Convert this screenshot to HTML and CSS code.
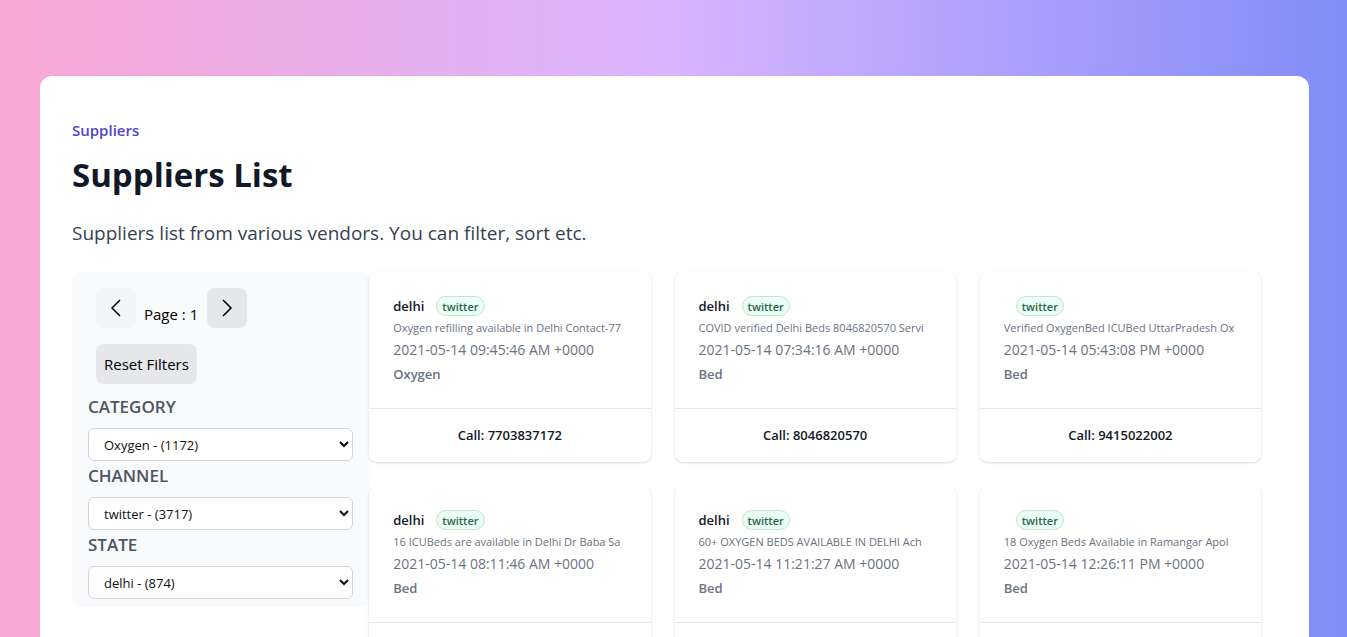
FILE: index.html
```html
<!DOCTYPE html>
<html lang="en">
<head>
<meta charset="utf-8">
<meta name="viewport" content="width=device-width, initial-scale=1">
<title>Suppliers List</title>
<link rel="stylesheet" href="styles.css">
</head>
<body>
<main class="page">
  <section class="panel">
    <header class="intro">
      <p class="eyebrow">Suppliers</p>
      <h1 class="title">Suppliers List</h1>
      <p class="lead">Suppliers list from various vendors. You can filter, sort etc.</p>
    </header>
    <div class="content">
      <aside class="filters">
        <div class="pager">
          <button class="btn btn-icon btn-muted" type="button" aria-label="Previous page">
            <svg viewBox="0 0 24 24" width="24" height="24"><path d="M16 4 8 12l8 8"/></svg>
          </button>
          <span class="page-label">Page : 1</span>
          <button class="btn btn-icon" type="button" aria-label="Next page">
            <svg viewBox="0 0 24 24" width="24" height="24"><path d="m8 4 8 8-8 8"/></svg>
          </button>
        </div>
        <button class="btn btn-reset" type="button">Reset Filters</button>
        <div class="field">
          <label for="category">CATEGORY</label>
          <select id="category"><option>Oxygen - (1172)</option></select>
        </div>
        <div class="field">
          <label for="channel">CHANNEL</label>
          <select id="channel"><option>twitter - (3717)</option></select>
        </div>
        <div class="field">
          <label for="state">STATE</label>
          <select id="state"><option>delhi - (874)</option></select>
        </div>
      </aside>
      <div class="cards">
        <article class="card">
          <div class="card-body">
            <div class="card-head"><h2 class="place">delhi</h2><span class="badge">twitter</span></div>
            <p class="desc">Oxygen refilling available in Delhi Contact-77</p>
            <p class="time">2021-05-14 09:45:46 AM +0000</p>
            <p class="kind">Oxygen</p>
          </div>
          <div class="card-foot"><a href="tel:7703837172">Call: 7703837172</a></div>
        </article>
        <article class="card">
          <div class="card-body">
            <div class="card-head"><h2 class="place">delhi</h2><span class="badge">twitter</span></div>
            <p class="desc">COVID verified Delhi Beds 8046820570 Servi</p>
            <p class="time">2021-05-14 07:34:16 AM +0000</p>
            <p class="kind">Bed</p>
          </div>
          <div class="card-foot"><a href="tel:8046820570">Call: 8046820570</a></div>
        </article>
        <article class="card">
          <div class="card-body">
            <div class="card-head"><h2 class="place"></h2><span class="badge">twitter</span></div>
            <p class="desc">Verified OxygenBed ICUBed UttarPradesh Ox</p>
            <p class="time">2021-05-14 05:43:08 PM +0000</p>
            <p class="kind">Bed</p>
          </div>
          <div class="card-foot"><a href="tel:9415022002">Call: 9415022002</a></div>
        </article>
        <article class="card">
          <div class="card-body">
            <div class="card-head"><h2 class="place">delhi</h2><span class="badge">twitter</span></div>
            <p class="desc">16 ICUBeds are available in Delhi Dr Baba Sa</p>
            <p class="time">2021-05-14 08:11:46 AM +0000</p>
            <p class="kind">Bed</p>
          </div>
          <div class="card-foot"></div>
        </article>
        <article class="card">
          <div class="card-body">
            <div class="card-head"><h2 class="place">delhi</h2><span class="badge">twitter</span></div>
            <p class="desc">60+ OXYGEN BEDS AVAILABLE IN DELHI Ach</p>
            <p class="time">2021-05-14 11:21:27 AM +0000</p>
            <p class="kind">Bed</p>
          </div>
          <div class="card-foot"></div>
        </article>
        <article class="card">
          <div class="card-body">
            <div class="card-head"><h2 class="place"></h2><span class="badge">twitter</span></div>
            <p class="desc">18 Oxygen Beds Available in Ramangar Apol</p>
            <p class="time">2021-05-14 12:26:11 PM +0000</p>
            <p class="kind">Bed</p>
          </div>
          <div class="card-foot"></div>
        </article>
      </div>
    </div>
  </section>
</main>
</body>
</html>
```
FILE: styles.css
```css
*, *::before, *::after { box-sizing: border-box; }

body {
  margin: 0;
  font-family: "Open Sans", "Noto Sans", sans-serif;
  font-size: 15px;
  line-height: 24px;
  color: #000;
}

h1, h2, p { margin: 0; }

.page {
  height: 100vh;
  overflow: hidden;
  padding: 76px 38px 0 40px;
  background: linear-gradient(to right, #f9a8d4, #d8b4fe, #818cf8);
}

.panel {
  padding: 40px 32px;
  background: #fff;
  border-radius: 12px;
}

.eyebrow {
  padding-top: 2px;
  font-size: 15px;
  font-weight: 600;
  color: #5145cd;
}

.title {
  margin-top: 13px;
  font-size: 33px;
  line-height: 40px;
  font-weight: 700;
  color: #111827;
}

.lead {
  margin-top: 24px;
  font-size: 19px;
  line-height: 28px;
  color: #374151;
}

.content {
  display: grid;
  grid-template-columns: 1fr 3fr;
  align-items: start;
  margin-top: 25px;
  padding-right: 16px;
}

.filters {
  padding: 16px 16px 8px;
  background: #f9fafb;
  border-radius: 8px;
}

.pager {
  display: flex;
  gap: 8px;
  margin: 0 8px 16px;
}

.page-label {
  min-width: 55px;
  padding-top: 14px;
}

.btn {
  height: 40px;
  padding: 8px;
  border: 0;
  border-radius: 8px;
  background: #e5e7eb;
  color: #000;
  font: inherit;
  line-height: 24px;
}

.btn-icon { width: 40px; }
.btn-muted { background: #f3f4f6; }

.btn svg {
  display: block;
  fill: none;
  stroke: #000;
  stroke-width: 1.5;
}

.btn-reset { margin: 0 8px 8px; }

.field label {
  display: block;
  height: 36px;
  line-height: 30px;
  font-size: 17px;
  font-weight: 600;
  color: #4b5563;
}

.field select {
  display: block;
  width: 100%;
  height: 33px;
  padding: 0 0 0 11px;
  border: 1px solid #d1d5db;
  border-radius: 6px;
  background: #fff;
  color: #111;
  font: inherit;
  font-size: 13px;
}

.cards {
  display: grid;
  grid-template-columns: repeat(3, minmax(0, 1fr));
  gap: 24px;
}

.card {
  background: #fff;
  border-radius: 8px;
  box-shadow: 0 1px 3px rgba(0, 0, 0, .1), 0 1px 2px rgba(0, 0, 0, .06);
}

.card-body {
  padding: 24px 24px 22px;
  font-size: 13px;
  color: #6b7280;
}

.card-head {
  display: flex;
  align-items: center;
  gap: 12px;
  height: 20px;
}

.place {
  font-size: 13px;
  line-height: 20px;
  font-weight: 600;
  color: #111827;
}

.badge {
  height: 20px;
  padding: 0 5px;
  border: 1px solid #bbe8d0;
  border-radius: 10px;
  background: #ecfdf5;
  color: #276749;
  font-size: 11px;
  line-height: 20px;
  font-weight: 600;
}

.desc {
  margin-top: 2px;
  overflow: hidden;
  white-space: nowrap;
  font-size: 11px;
  line-height: 20px;
}

.time {
  font-size: 14px;
  line-height: 24px;
}

.kind { font-weight: 600; line-height: 24px; }

.card-foot {
  display: flex;
  align-items: flex-start;
  justify-content: center;
  min-height: 54px;
  padding-top: 14px;
  border-top: 1px solid #e5e7eb;
}

.card-foot a {
  color: #111827;
  font-size: 13px;
  font-weight: 600;
  text-decoration: none;
}
```
